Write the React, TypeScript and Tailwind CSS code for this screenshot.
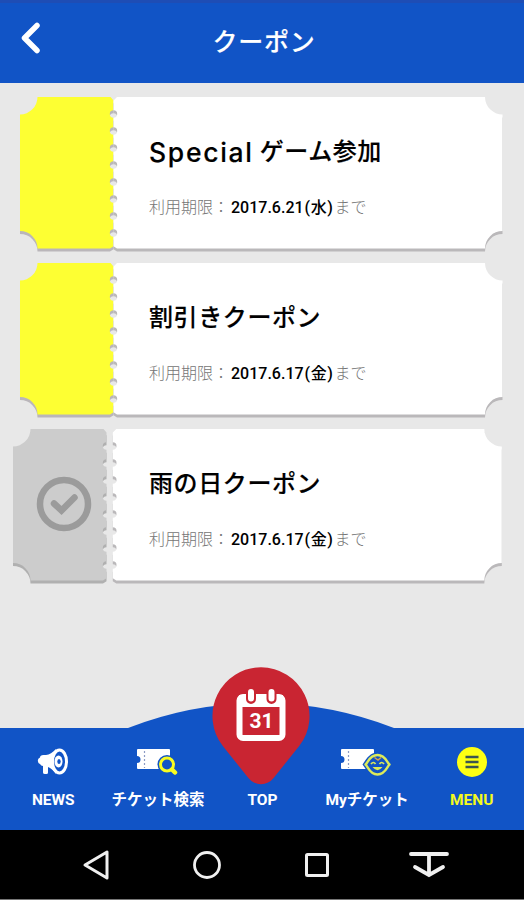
import React from "react";

interface Coupon {
  id: number;
  prefix?: string;
  title: string;
  date: string;
  day: string;
  used: boolean;
}

const coupons: Coupon[] = [
  { id: 1, prefix: "Special", title: "ゲーム参加", date: "2017.6.21", day: "水", used: false },
  { id: 2, title: "割引きクーポン", date: "2017.6.17", day: "金", used: false },
  { id: 3, title: "雨の日クーポン", date: "2017.6.17", day: "金", used: true },
];

// Left part of the ticket, perforated on its right edge
const STUB_PATH =
  "M17.5 0H90.5L93.5 3.5V13.3a3.7 3.7 0 0 0 0 7.4v9.6a3.7 3.7 0 0 0 0 7.4v9.6a3.7 3.7 0 0 0 0 7.4v9.6a3.7 3.7 0 0 0 0 7.4v9.6a3.7 3.7 0 0 0 0 7.4v9.6a3.7 3.7 0 0 0 0 7.4v9.6a3.7 3.7 0 0 0 0 7.4v9.6a3.7 3.7 0 0 0 0 7.4v9.6L90 151.5H17.5A17.5 17.5 0 0 0 0 134V17.5A17.5 17.5 0 0 0 17.5 0Z";

// Right part of the ticket, perforated on its left edge
const BODY_PATH =
  "M97 0H465A17.5 17.5 0 0 0 482.5 17.5V134A17.5 17.5 0 0 0 465 151.5H97L93.5 149.3v-9.6a3.7 3.7 0 0 0 0 -7.4v-9.6a3.7 3.7 0 0 0 0 -7.4v-9.6a3.7 3.7 0 0 0 0 -7.4v-9.6a3.7 3.7 0 0 0 0 -7.4v-9.6a3.7 3.7 0 0 0 0 -7.4v-9.6a3.7 3.7 0 0 0 0 -7.4v-9.6a3.7 3.7 0 0 0 0 -7.4v-9.6a3.7 3.7 0 0 0 0 -7.4V3.5Z";

const TicketShape: React.FC<{ used: boolean }> = ({ used }) => (
  <svg className="absolute inset-0 overflow-visible" width="483" height="155" viewBox="0 0 483 155">
    <g transform={used ? "translate(-7 0)" : undefined}>
      <path d={STUB_PATH} fill={used ? "#b0b0b0" : "#bab6ba"} transform="translate(0 3)" />
      <path d={STUB_PATH} fill={used ? "#cccccc" : "#fdff33"} />
    </g>
    <g transform={used ? "translate(-0.7 0)" : undefined}>
      <path d={BODY_PATH} fill="#bab8ba" transform="translate(0 3)" />
      <path d={BODY_PATH} fill="#ffffff" />
    </g>
  </svg>
);

const CouponCard: React.FC<{ coupon: Coupon }> = ({ coupon }) => (
  <li className="relative flex h-[155px] w-[483px]">
    <TicketShape used={coupon.used} />
    <div className="relative flex w-[94px] shrink-0 pt-[47px] pl-4">
      {coupon.used && (
        <svg width="56" height="56" viewBox="0 0 56 56" fill="none" stroke="#9b9b9b">
          <circle cx="28" cy="28" r="24" strokeWidth="6.5" />
          <path d="M18 27.5L25.5 34.5L38.5 21.5" strokeWidth="6.5" strokeLinecap="round" />
        </svg>
      )}
    </div>
    <div className="relative pt-[39px] pl-[35px]">
      <h2 className="flex h-8 items-center text-[24px] leading-8 font-medium tracking-[0.6px] whitespace-nowrap text-black [-webkit-text-stroke:0.15px_black]">
        {coupon.prefix && <span className="mr-[6px] font-[Inter,sans-serif] text-[26.5px] tracking-[1.7px]">{coupon.prefix}</span>}
        {coupon.title}
      </h2>
      <p className="mt-7 text-[16px] leading-6 font-light whitespace-nowrap text-[#757575]">
        利用期限：
        <span className="ml-[2px] font-medium text-black">
          {coupon.date}
          <span className="mr-px ml-px tracking-[0.6px]">({coupon.day})</span>
        </span>
        まで
      </p>
    </div>
  </li>
);

const NewsIcon = () => (
  <svg width="34" height="30" viewBox="0 0 34 30">
    <path d="M20 2Q15 7.5 10 8H7.5Q4 8 4 10.5A3.5 3.5 0 0 0 4 17Q5 19 7 19V25.5Q7 27 9 27H10.5Q12 27 12 25.5V20Q16 21.5 20 27Z" fill="#fff" />
    <ellipse cx="23.5" cy="14.5" rx="7" ry="11.5" fill="#1154c6" stroke="#fff" strokeWidth="3" />
    <ellipse cx="22.5" cy="14.5" rx="4" ry="6" fill="#fff" />
    <ellipse cx="23" cy="14.5" rx="1.7" ry="2.5" fill="#1154c6" />
  </svg>
);

const TicketBase = () => (
  <>
    <path d="M2 2H33Q34 2 34 3V22H2Q1 22 1 21V16A3.5 3.5 0 0 0 1 9V3Q1 2 2 2Z" fill="#fff" />
    <path d="M8.5 4V21" stroke="#8c9bc4" strokeWidth="1.2" strokeDasharray="2 2" />
  </>
);

const SearchTicketIcon = () => (
  <svg className="-ml-[2px]" width="42" height="30" viewBox="0 0 42 30" fill="none">
    <TicketBase />
    <circle cx="31" cy="17.5" r="9.5" fill="#1154c6" />
    <circle cx="31" cy="17.5" r="6.5" stroke="#f8fc20" strokeWidth="3" />
    <path d="M36 22.5L39 25.5" stroke="#f8fc20" strokeWidth="4.5" strokeLinecap="round" />
  </svg>
);

const MyTicketIcon = () => (
  <svg className="-ml-[2px]" width="52" height="30" viewBox="0 0 52 30" fill="none">
    <TicketBase />
    <path d="M22.5 17.5C27 11 30 5.5 37.5 5.5S48 11 52 17.5C48 24 45 29 37.5 29S27 24 22.5 17.5Z" fill="#1154c6" />
    <path d="M25.5 17.5C28 15.5 29.5 8 37.5 8S47 15.5 49.5 17.5C47 19.5 45.5 27.500 37.5 27.500S28 19.5 25.5 17.5Z" stroke="#dcea5a" strokeWidth="2.4" strokeLinejoin="round" />
    <path d="M31 17Q33.500 14 35.5 17M39.5 17Q41.500 14 44 17" stroke="#dcea5a" strokeWidth="1.7" />
    <path d="M32.500 20H42.500Q37.5 26.500 32.500 20Z" fill="#dcea5a" />
    <path d="M34.5 10.5L38 13L41 10.5" stroke="#d9a54a" strokeWidth="1.5" />
  </svg>
);

const MenuIcon = () => (
  <svg width="30" height="30" viewBox="0 0 30 30">
    <circle cx="15" cy="15" r="15" fill="#fdff13" />
    <path d="M8.5 10H21.5M8.5 15H21.5M8.5 20H21.5" stroke="#3c5550" strokeWidth="2.5" />
  </svg>
);

const PinIcon = () => (
  <svg width="98" height="118" viewBox="0 0 98 118">
    <path d="M49 0.3A48.7 48.7 0 0 1 87.2 79L61.6 111A16 16 0 0 1 36.4 111L10.8 79A48.7 48.7 0 0 1 49 0.3Z" fill="#c92532" />
    <rect x="27.5" y="30" width="43" height="41" rx="3.5" fill="none" stroke="#fff" strokeWidth="6" />
    <path d="M27 28H71V40H27Z" fill="#fff" />
    <path d="M39 25V32M59.5 25V32" stroke="#c92532" strokeWidth="10" strokeLinecap="round" />
    <path d="M39 25V31.5M59.5 25V31.5" stroke="#fff" strokeWidth="6" strokeLinecap="round" />
    <text x="49.5" y="60.500" textAnchor="middle" className="text-[21px] font-bold" fill="#fff">31</text>
  </svg>
);

const navItems = [
  { label: "NEWS", icon: <NewsIcon />, color: "text-white" },
  { label: "チケット検索", icon: <SearchTicketIcon />, color: "text-white" },
  { label: "TOP", icon: null, color: "text-white" },
  { label: "Myチケット", icon: <MyTicketIcon />, color: "text-white" },
  { label: "MENU", icon: <MenuIcon />, color: "text-[#f4fa1c]" },
];

const BottomNav = () => (
  <nav className="relative h-[102px] bg-[#1154c6]">
    {/* Raised hill and pin behind the TOP item */}
    <svg className="absolute top-[-25px] left-[127px]" width="268" height="26" viewBox="0 0 268 26">
      <path d="M0 26L1 25A366 366 0 0 1 267 25L268 26Z" fill="#1154c6" />
    </svg>
    <div className="absolute top-[-61px] left-[212px]">
      <PinIcon />
    </div>
    <ul className="relative flex h-full pt-[18px] pl-px">
      {navItems.map((item) => (
        <li key={item.label} className="flex flex-1 flex-col items-center">
          <div className="flex h-8 items-center">{item.icon}</div>
          <span className={`mt-[11px] text-[15.5px] leading-[22px] font-bold whitespace-nowrap ${item.color}`}>{item.label}</span>
        </li>
      ))}
    </ul>
  </nav>
);

const SystemBar = () => (
  <footer className="flex h-[70px] items-center gap-[83px] border-b border-[#777] bg-black pl-[82px]">
    <svg width="28" height="32" viewBox="0 0 28 32" fill="none" stroke="#f0f0f0" strokeWidth="3">
      <path d="M25 3V29L3 16Z" strokeLinejoin="round" />
    </svg>
    <svg width="28" height="28" viewBox="0 0 28 28" fill="none" stroke="#f0f0f0" strokeWidth="2.8">
      <circle cx="14" cy="14" r="12.5" />
    </svg>
    <svg width="26" height="26" viewBox="0 0 26 26" fill="none" stroke="#f0f0f0" strokeWidth="3">
      <rect x="2.5" y="2.5" width="21" height="21" rx="1" />
    </svg>
    <svg className="-ml-1" width="40" height="28" viewBox="0 0 40 28" fill="none" stroke="#f0f0f0" strokeWidth="3.8" strokeLinecap="round">
      <path d="M2 3H38M20 3V24M6 16L20 24L34 16" />
    </svg>
  </footer>
);

const App: React.FC = () => {
  return (
    <div className="flex h-[900px] w-[524px] flex-col overflow-hidden bg-[#e8e8e8] font-[Roboto,'Noto_Sans_CJK_JP',sans-serif]">
      <header className="flex h-[83px] shrink-0 items-center border-t-3 border-[#1e4db5] bg-[#1154c6] px-5">
        <svg className="-mt-[11px]" width="22" height="34" viewBox="0 0 22 34" fill="none" stroke="#fff" strokeWidth="5.5" strokeLinecap="round" strokeLinejoin="round">
          <path d="M17 4.5L4.5 17L17 29.5" />
        </svg>
        <h1 className="flex-1 pr-[18px] text-center text-[25px] leading-8 font-medium tracking-[0.8px] text-white [-webkit-text-stroke:0.15px_white]">
          クーポン
        </h1>
      </header>

      <main className="flex-1 pt-[14px] pl-5">
        <ul className="flex flex-col gap-[11px]">
          {coupons.map((coupon) => (
            <CouponCard key={coupon.id} coupon={coupon} />
          ))}
        </ul>
      </main>

      <BottomNav />
      <SystemBar />
    </div>
  );
};

export default App;
